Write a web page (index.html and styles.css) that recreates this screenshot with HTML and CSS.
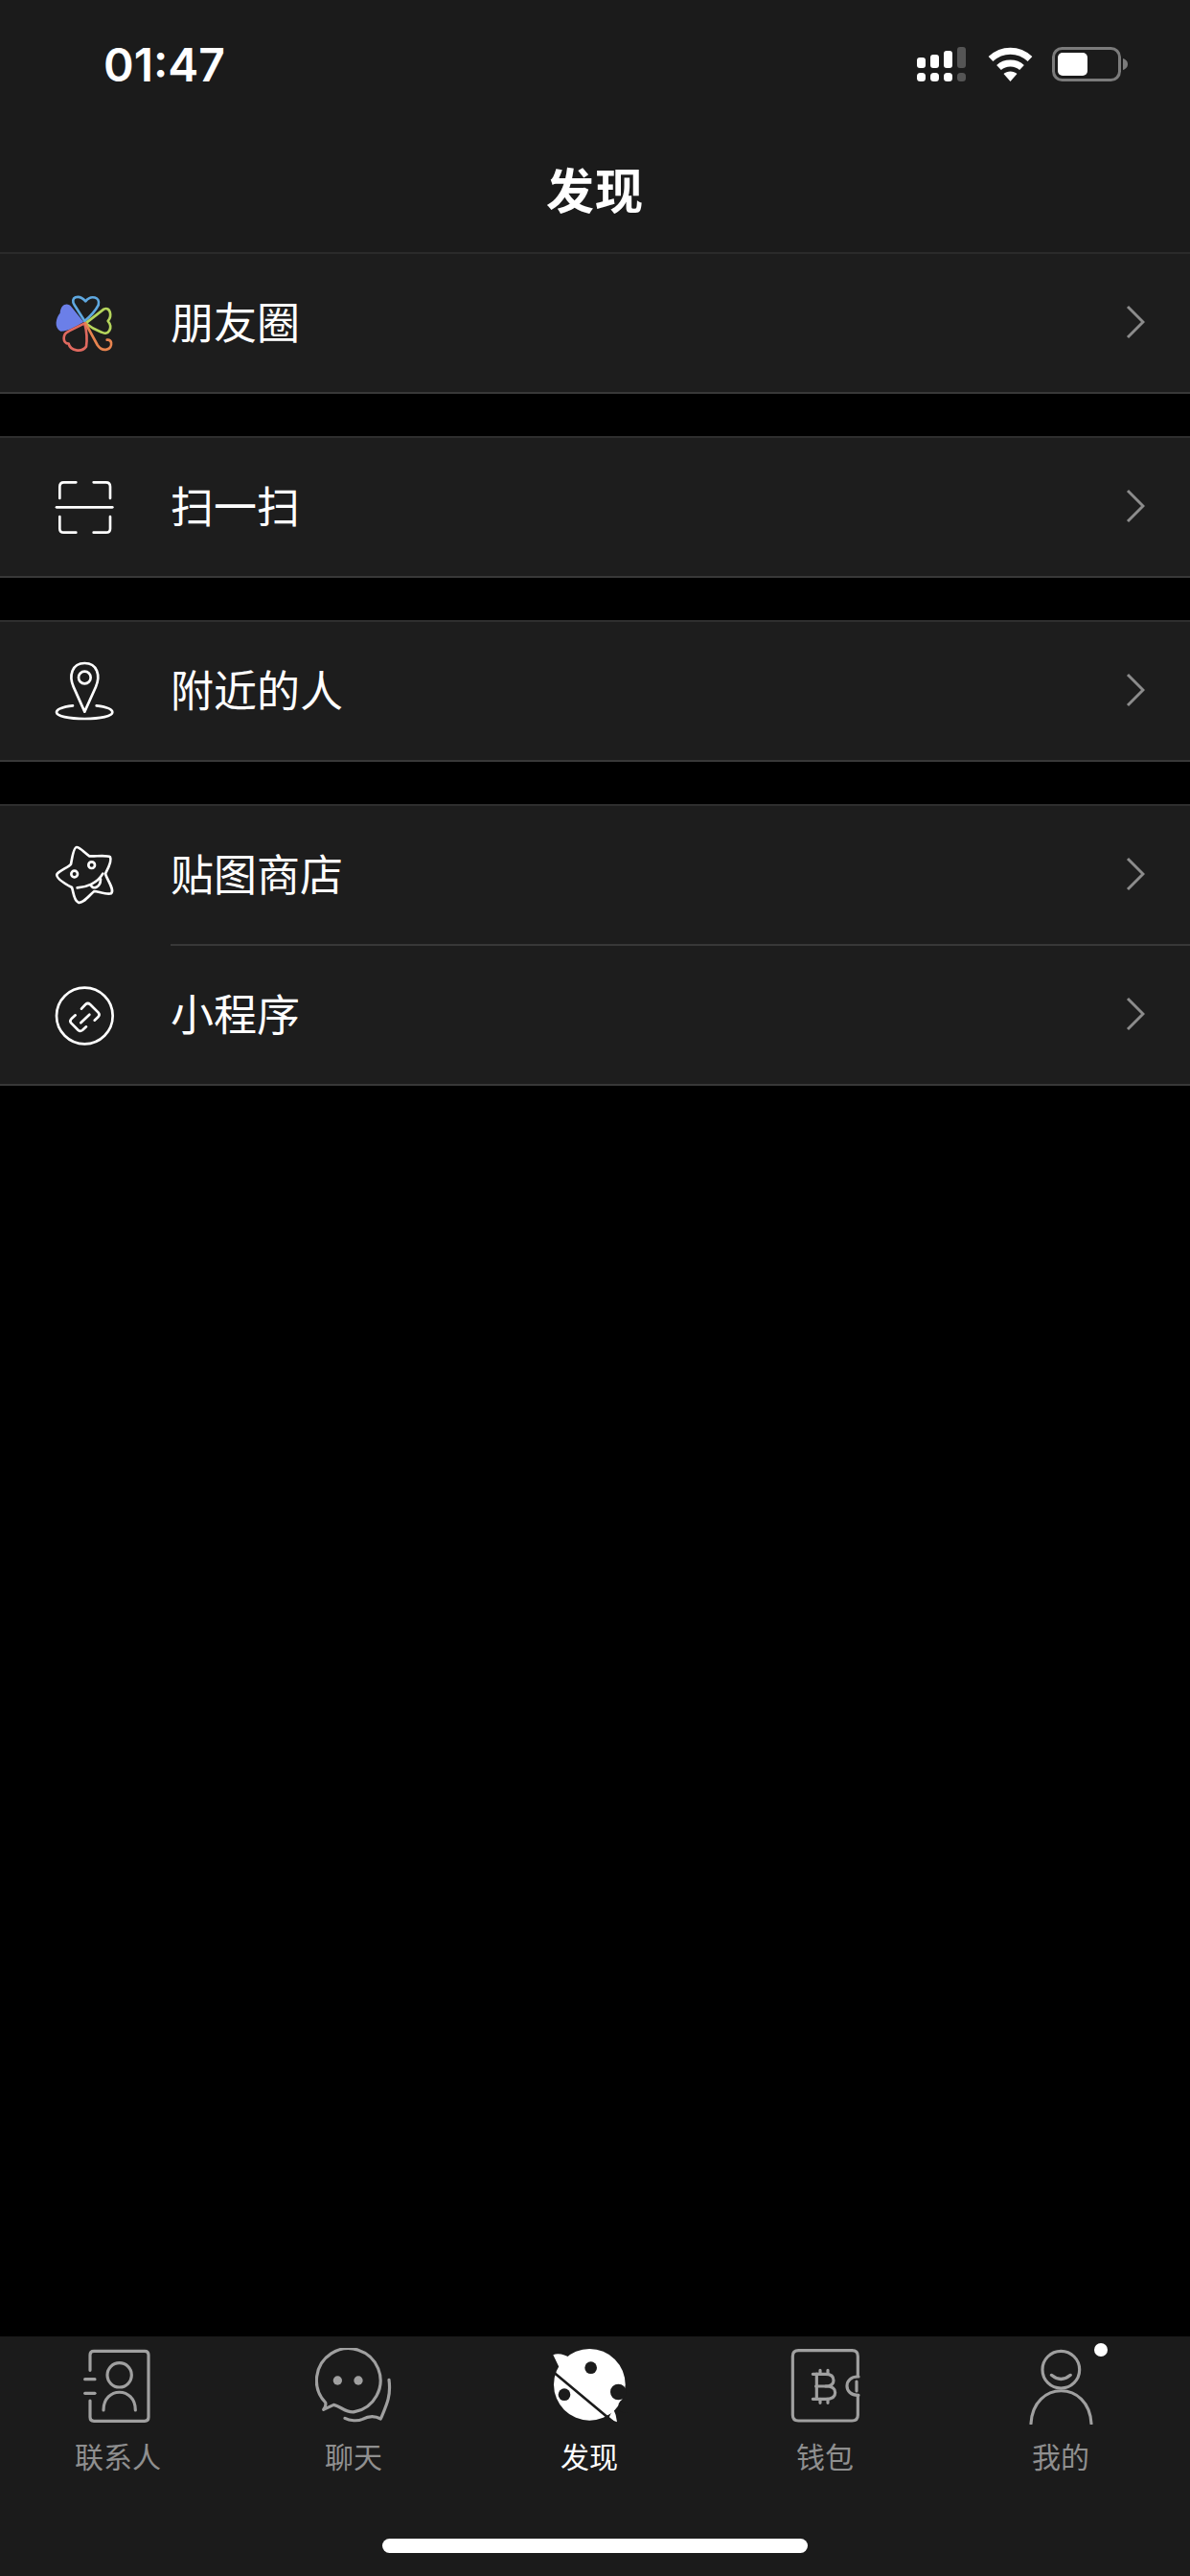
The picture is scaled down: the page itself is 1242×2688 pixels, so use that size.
FILE: index.html
```html
<!DOCTYPE html>
<html lang="zh-CN">
<head>
    <meta charset="UTF-8">
    <meta name="viewport" content="width=device-width, initial-scale=1.0">
    <title>发现</title>
    <link rel="stylesheet" href="styles.css">
</head>
<body>

    <header class="top">
        <div class="status">
            <span class="time">01:47</span>
            <div class="status-icons">
                <svg class="signal" viewBox="0 0 54 36" width="54" height="36">
                    <g fill="#fff">
                        <rect x="0" y="11" width="9" height="11" rx="3"/>
                        <rect x="14" y="8" width="9" height="14" rx="3"/>
                        <rect x="28" y="4" width="9" height="18" rx="3"/>
                        <rect x="0" y="27" width="9" height="9" rx="3.5"/>
                        <rect x="14" y="27" width="9" height="9" rx="3.5"/>
                        <rect x="28" y="27" width="9" height="9" rx="3.5"/>
                    </g>
                    <g fill="#555">
                        <rect x="42" y="0" width="9" height="22" rx="3"/>
                        <rect x="42" y="27" width="9" height="9" rx="3.5"/>
                    </g>
                </svg>
                <svg class="wifi" viewBox="0 0 47 36" width="47" height="36">
                    <path d="M3 12.500 C15 1.500 32 1.500 44 12.500" fill="none" stroke="#fff" stroke-width="7"/>
                    <path d="M11.500 21.500 C18 15.500 29 15.500 35.500 21.500" fill="none" stroke="#fff" stroke-width="7"/>
                    <path d="M16.500 28 C20 24.500 27 24.500 30.500 28 L23.500 36 Z" fill="#fff"/>
                </svg>
                <svg class="battery" viewBox="0 0 80 36" width="80" height="36">
                    <rect x="1.500" y="1.500" width="69" height="33" rx="9" fill="none" stroke="#7b7b7b" stroke-width="3"/>
                    <rect x="6" y="6" width="31" height="24" rx="5" fill="#fff"/>
                    <path d="M74 12 C78 13.500 79 16 79 18 C79 20 78 22.500 74 24 Z" fill="#7b7b7b"/>
                </svg>
            </div>
        </div>
        <h1 class="title">发现</h1>
    </header>

    <main class="list">
        <section class="group">
            <div class="row">
                <svg class="row-icon" viewBox="84 78 180 180">
                    <path d="M98 140 C85 155 78 185 100 197 C125 197 150 180 172 168 L135 122 C122 105 100 112 98 140 Z" fill="#6b7fe8"/>
                    <g fill="none" stroke-width="8" stroke-linecap="round" stroke-linejoin="round">
                        <path d="M175 165 L143 115 C128 92 155 78 178 103 C195 82 225 90 218 115 Q205 140 175 165" stroke="#5fa8e0"/>
                        <path d="M178 172 L235 128 C255 118 262 150 248 165 C265 185 250 212 228 200 Q200 190 178 172" stroke="#b5d55c"/>
                        <path d="M175 172 L125 197 C105 205 105 235 125 236 C130 258 165 265 180 245 Q185 210 175 172" stroke="#e0695f"/>
                        <path d="M178 172 L215 240 C232 265 262 255 258 232 Q255 222 245 224" stroke="#e8844f"/>
                    </g>
                </svg>
                <span class="label">朋友圈</span>
                <svg class="chevron" viewBox="0 0 20 36"><path d="M2 2 L18 18 L2 34"/></svg>
            </div>
        </section>

        <section class="group">
            <div class="row">
                <svg class="row-icon line" viewBox="84 84 180 180">
                    <path d="M148 100 H110 Q97 100 97 113 V150"/>
                    <path d="M203 100 H242 Q255 100 255 113 V150"/>
                    <path d="M97 207 V245 Q97 257 110 257 H148"/>
                    <path d="M255 207 V245 Q255 257 242 257 H203"/>
                    <path d="M87 178 H262"/>
                </svg>
                <span class="label">扫一扫</span>
                <svg class="chevron" viewBox="0 0 20 36"><path d="M2 2 L18 18 L2 34"/></svg>
            </div>
        </section>

        <section class="group">
            <div class="row">
                <svg class="row-icon line" viewBox="84 660 180 180">
                    <path d="M175 818 L140 740 C125 705 135 666 175 666 C215 666 225 705 210 740 Z"/>
                    <circle cx="175" cy="711" r="19"/>
                    <path d="M138 799 C105 803 87 810 87 820 C87 832 125 840 175 840 C225 840 262 832 262 820 C262 810 245 803 212 799"/>
                </svg>
                <span class="label">附近的人</span>
                <svg class="chevron" viewBox="0 0 20 36"><path d="M2 2 L18 18 L2 34"/></svg>
            </div>
        </section>

        <section class="group">
            <div class="row">
                <svg class="row-icon line" viewBox="84 66 180 180">
                    <path d="M150 72 C160 72 175 90 190 100 C205 102 245 95 255 103 C262 115 245 145 240 155 C245 175 270 205 258 217 C245 222 215 210 205 210 C190 222 170 250 155 245 C140 238 140 210 135 198 C120 190 85 170 88 157 C95 145 125 135 132 125 C135 110 140 72 150 72 Z"/>
                    <circle cx="143" cy="156" r="10"/>
                    <circle cx="197" cy="128" r="10"/>
                    <path d="M152 199 C180 198 215 185 232 155"/>
                    <path d="M195 192 C200 205 225 200 225 172"/>
                </svg>
                <span class="label">贴图商店</span>
                <svg class="chevron" viewBox="0 0 20 36"><path d="M2 2 L18 18 L2 34"/></svg>
            </div>
            <div class="row row-split">
                <svg class="row-icon line" viewBox="84 504 180 180">
                    <circle cx="175" cy="600" r="88"/>
                    <path d="M165 578 L178 564 Q185 558 192 564 L218 590 Q224 597 217 604 L206 614"/>
                    <path d="M146 598 L133 610 Q127 616 133 623 L155 645 Q161 650 168 645 L180 634"/>
                    <path d="M163 622 L190 596"/>
                </svg>
                <span class="label">小程序</span>
                <svg class="chevron" viewBox="0 0 20 36"><path d="M2 2 L18 18 L2 34"/></svg>
            </div>
        </section>
    </main>

    <footer class="tabbar">
        <nav class="tabs">
            <div class="tab">
                <svg class="tab-icon" viewBox="130 90 240 240">
                    <path d="M163 160 V112 Q163 100 175 100 H334 Q346 100 346 112 V307 Q346 319 334 319 H175 Q163 319 163 307 V255"/>
                    <path d="M147 188 H178"/>
                    <path d="M147 232 H178"/>
                    <circle cx="255" cy="175" r="38"/>
                    <path d="M205 285 C205 210 305 210 305 285"/>
                </svg>
                <span>联系人</span>
            </div>
            <div class="tab">
                <svg class="tab-icon" viewBox="867 90 240 240">
                    <path d="M899 261 A100 100 0 1 1 990 290 C965 295 945 272 925 268 L893 283 Q902 272 899 261 Z"/>
                    <path d="M1098 190 C1105 240 1090 270 1072 312 C1050 300 1030 305 1015 313 C1000 320 975 318 960 310"/>
                    <circle class="dot" cx="937" cy="192" r="14"/>
                    <circle class="dot" cx="1002" cy="192" r="14"/>
                </svg>
                <span>聊天</span>
            </div>
            <div class="tab tab-active">
                <svg class="tab-icon planet" viewBox="105 90 240 240">
                    <circle class="white" cx="226" cy="205" r="112"/>
                    <path class="white" d="M112 112 C125 105 150 110 165 122 L135 160 Z"/>
                    <path class="white" d="M312 322 L285 312 L300 280 Q310 300 312 322 Z"/>
                    <path class="cut" d="M112 165 L300 322"/>
                    <circle class="hole" cx="230" cy="152" r="19"/>
                    <circle class="hole" cx="147" cy="236" r="19"/>
                    <circle class="hole" cx="316" cy="228" r="25"/>
                    <circle class="hole" cx="338" cy="272" r="22"/>
                </svg>
                <span>发现</span>
            </div>
            <div class="tab">
                <svg class="tab-icon" viewBox="843 90 240 240">
                    <path d="M1066 178 V116 Q1066 98 1048 98 H880 Q862 98 862 116 V300 Q862 318 880 318 H1048 Q1066 318 1066 300 V238"/>
                    <path d="M1068 180 C1020 178 1020 240 1068 238"/>
                    <path d="M1062 195 V225"/>
                    <path d="M935 172 H965 Q990 172 990 192 Q990 210 965 210 H935"/>
                    <path d="M965 210 Q995 210 995 230 Q995 250 965 250 H935"/>
                    <path d="M937 172 V250"/>
                    <path d="M925 172 H940 M925 250 H940 M948 160 V172 M972 160 V172 M948 250 V262 M972 250 V262"/>
                </svg>
                <span>钱包</span>
            </div>
            <div class="tab">
                <i class="badge"></i>
                <svg class="tab-icon" viewBox="381 90 240 240">
                    <circle cx="502" cy="158" r="58"/>
                    <path d="M472 175 Q502 200 532 175"/>
                    <path d="M408 327 C415 190 590 190 597 327"/>
                </svg>
                <span>我的</span>
            </div>
        </nav>
        <div class="home-bar"></div>
    </footer>

</body>
</html>
```

FILE: styles.css
```css
* {
    box-sizing: border-box;
}

body {
    margin: 0;
    width: 1242px;
    height: 2688px;
    display: flex;
    flex-direction: column;
    background-color: #000;
    color: #fff;
    font-family: "Noto Sans CJK SC", "Noto Sans", sans-serif;
}

.top {
    height: 263px;
    background-color: #1b1b1b;
}

.status {
    height: 134px;
    padding: 0 64px 0 108px;
    display: flex;
    align-items: center;
    justify-content: space-between;
}

.time {
    font-family: Inter, sans-serif;
    font-size: 48px;
    font-weight: 600;
}

.status-icons {
    display: flex;
    align-items: center;
    gap: 20px;
}

.title {
    margin: 0;
    height: 129px;
    padding-bottom: 6px;
    display: flex;
    align-items: center;
    justify-content: center;
    font-size: 50px;
    font-weight: 700;
    letter-spacing: 1px;
}

.group {
    background-color: #1d1d1d;
    border-top: 2px solid #2e2e2e;
    border-bottom: 2px solid #383838;
    margin-bottom: 44px;
}

.group:first-child {
    border-top-color: #2a2a2a;
}

.row {
    height: 144px;
    display: flex;
    align-items: center;
    padding: 0 47px 2px 58px;
}

.row-split {
    position: relative;
    height: 146px;
    padding-bottom: 0;
}

.row-split::before {
    content: "";
    position: absolute;
    top: 0;
    left: 178px;
    right: 0;
    height: 2px;
    background-color: #383838;
}

.row-icon {
    width: 60px;
    height: 60px;
    flex-shrink: 0;
    overflow: visible;
}

.line {
    fill: none;
    stroke: #fff;
    stroke-width: 8;
    stroke-linecap: round;
    stroke-linejoin: round;
}

.label {
    flex: 1;
    margin-left: 60px;
    padding-bottom: 4px;
    font-size: 45px;
}

.chevron {
    width: 20px;
    height: 36px;
    fill: none;
    stroke: #8c8c8c;
    stroke-width: 3;
}

.tabbar {
    margin-top: auto;
    height: 250px;
    padding-top: 12px;
    background-color: #1b1b1b;
}

.tabs {
    display: grid;
    grid-template-columns: repeat(5, 246px);
}

.tab {
    position: relative;
    display: flex;
    flex-direction: column;
    align-items: center;
    font-size: 30px;
    line-height: 40px;
    color: #8f8f8f;
}

.tab span {
    margin-top: 12px;
}

.tab-active {
    color: #fff;
}

.tab-icon {
    width: 80px;
    height: 80px;
    fill: none;
    stroke: #a0a0a0;
    stroke-width: 9.500;
    stroke-linecap: round;
    stroke-linejoin: round;
}

.tab-icon .dot {
    fill: #a0a0a0;
    stroke: none;
}

.planet .white {
    fill: #fff;
    stroke: none;
}

.planet .cut {
    stroke: #1b1b1b;
    stroke-width: 8;
}

.planet .hole {
    fill: #1b1b1b;
    stroke: none;
}

.badge {
    position: absolute;
    top: -5px;
    left: 158px;
    width: 14px;
    height: 14px;
    border-radius: 50%;
    background-color: #fff;
}

.home-bar {
    width: 444px;
    height: 15px;
    margin: 67px auto 0;
    border-radius: 8px;
    background-color: #fff;
}
```
